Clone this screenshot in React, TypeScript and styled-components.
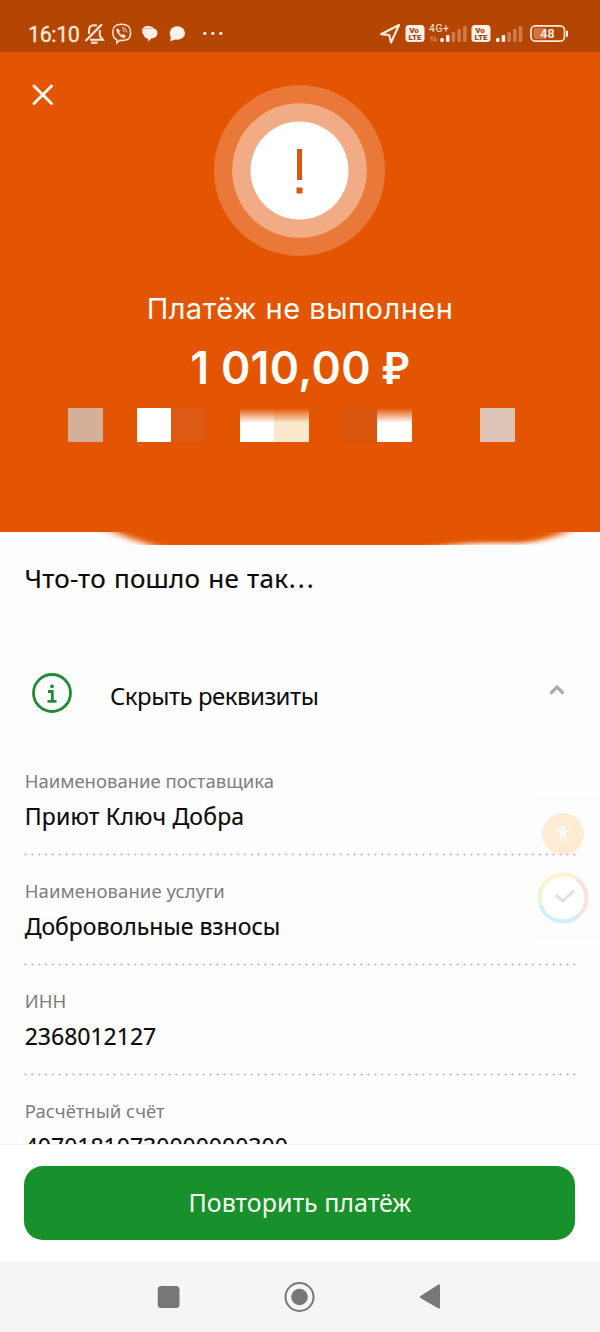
import React from "react";
import styled, { createGlobalStyle } from "styled-components";

const Global = createGlobalStyle`
  * { box-sizing: border-box; }
  html, body { margin: 0; padding: 0; background: #fff; }
  body { font-family: "Noto Sans", "Open Sans", sans-serif; color: #0b0b0b; }
`;

const Screen = styled.div`
  position: relative;
  width: 600px;
  height: 1332px;
  overflow: hidden;
  display: flex;
  flex-direction: column;
  background: #fefefe;
`;

const StatusBar = styled.div`
  height: 52px;
  flex: none;
  display: flex;
  justify-content: space-between;
  padding: 16px 31px 0 28px;
  background: #b54503;
  font-family: Roboto, sans-serif;
  color: #ffeadb;
`;

const Clock = styled.div`
  width: 56px;
  font-size: 21.5px;
  line-height: 37px;
  letter-spacing: -0.4px;
  -webkit-text-stroke: 0.3px #ffeadb;
`;

const StatusGroup = styled.div`
  display: flex;
`;

const Glyphs = styled.svg`
  display: block;
  flex: none;
`;

const Hero = styled.header`
  position: relative;
  height: 479.5px;
  flex: none;
  display: flex;
  flex-direction: column;
  align-items: center;
  background: #e35502;
  color: #fffdf8;
  font-family: Inter, sans-serif;
`;

const Close = styled.button`
  position: absolute;
  left: 32px;
  top: 32px;
  padding: 0;
  border: 0;
  background: none;
  line-height: 0;
`;

const Halo = styled.div`
  margin: 33px 1px 0 0;
  width: 171px;
  height: 171px;
  flex: none;
`;

const Title = styled.h1`
  margin: 35px 0 0;
  font-size: 29px;
  font-weight: 430;
  line-height: 36px;
  letter-spacing: 0.5px;
  white-space: nowrap;
`;

const Amount = styled.div`
  margin-top: 13px;
  height: 56px;
  font-size: 44.5px;
  font-weight: 600;
  line-height: 56px;
  letter-spacing: 0.35px;
  white-space: nowrap;
`;

const Currency = styled.span`
  font-family: "Noto Sans", sans-serif;
  font-size: 45.5px;
  line-height: 1;
`;

const Mosaic = styled.div`
  align-self: flex-start;
  display: grid;
  grid-template-columns: repeat(13, 34.35px);
  margin: 11.5px 0 0 68.2px;
  height: 34px;
`;

const Tile = styled.div<{ $c: string; $faded?: boolean }>`
  background: ${(p) =>
    p.$faded ? `linear-gradient(#e35502 0, ${p.$c} 15px)` : p.$c};
`;

const Smear = styled.svg`
  position: absolute;
  left: 0;
  top: 478.5px;
  z-index: 1;
`;

const Details = styled.main`
  height: 612.5px;
  flex: none;
  overflow: hidden;
  padding: 0 24px 0 24px;
`;

const Message = styled.p`
  margin: 28px 0 0 0.5px;
  font-size: 26px;
  line-height: 36px;
  letter-spacing: 0.25px;
  word-spacing: 1px;
  white-space: nowrap;
  -webkit-text-stroke: 0.2px #0b0b0b;
`;

const Dots = styled.span`
  letter-spacing: 2px;
  margin-left: 0.5px;
`;

const Toggle = styled.div`
  display: flex;
  align-items: center;
  height: 64px;
  margin-top: 65.5px;
  padding-left: 8px;
`;

const Chevron = styled.svg`
  margin-top: -3px;
`;

const ToggleText = styled.span`
  flex: 1;
  margin: 5px 0 0 38px;
  font-size: 24px;
  line-height: 34px;
  letter-spacing: -0.5px;
  white-space: nowrap;
`;

const Fields = styled.div`
  margin-top: 29.5px;
`;

const Field = styled.div`
  height: 110px;
  padding: 13px 0 0 0.7px;
  background: radial-gradient(circle, #b5b5b5 0.8px, transparent 1.3px) -2px 98px / 6.87px 3px repeat-x;
`;

const Label = styled.div<{ $track?: number }>`
  font-size: 18.5px;
  line-height: 26px;
  color: #7d7d7d;
  letter-spacing: ${(p) => p.$track ?? 0}px;
  white-space: nowrap;
`;

const Value = styled.div<{ $track?: number }>`
  margin-top: 6px;
  font-size: 23px;
  line-height: 32px;
  letter-spacing: ${(p) => p.$track ?? 0}px;
  white-space: nowrap;
  -webkit-text-stroke: 0.2px #0b0b0b;
`;

const Widget = styled.aside`
  position: absolute;
  left: 526px;
  top: 798px;
  width: 74px;
  height: 140px;
  border-radius: 16px 0 0 16px;
  background: rgba(0, 0, 0, 0.005);
  box-shadow: 0 0 6px rgba(0, 0, 0, 0.012);
`;

const Footer = styled.footer`
  height: 117px;
  flex: none;
  padding: 20.5px 24.4px 0;
  border-top: 1px solid #f4f4f4;
  background: #fff;
`;

const Retry = styled.button`
  display: block;
  width: 551px;
  height: 74px;
  padding: 0 0 2px 0;
  border: 0;
  border-radius: 19px;
  background: #18902c;
  color: #f7fff2;
  font-family: "Noto Sans", sans-serif;
  font-size: 25px;
  line-height: 72px;
`;

const NavBar = styled.nav`
  flex: 1;
  background: #f5f5f5;
`;

const tiles: { c: string; faded?: boolean }[] = [
  { c: "#d3ae99" },
  { c: "transparent" },
  { c: "#ffffff" },
  { c: "#dc5a13" },
  { c: "transparent" },
  { c: "#ffffff", faded: true },
  { c: "#f8e9cd", faded: true },
  { c: "transparent" },
  { c: "#d9560f" },
  { c: "#ffffff", faded: true },
  { c: "transparent" },
  { c: "transparent" },
  { c: "#dec3b7" },
];

const fields = [
  { label: "Наименование поставщика", value: "Приют Ключ Добра", track: 0.2 },
  { label: "Наименование услуги", value: "Добровольные взносы", labelTrack: 0.08 },
  { label: "ИНН", value: "2368012127" },
  { label: "Расчётный счёт", value: "40701810730000000300" },
];

function NotificationIcons() {
  return (
    <Glyphs width="146" height="36" viewBox="84 16 146 36" fill="none" stroke="#ffeadb" strokeWidth="2">
      <path d="M85.500 41 102 24.300" strokeWidth="2.200" />
      <path d="M89 34v-3.500c0-3.200 2-5.300 5.200-5.300 1 0 2 .2 2.800.7M99.800 30V36l3 3.700H90" />
      <path d="M91 42.700h6.500" strokeWidth="2.200" />
      <path d="M121.500 24.300c-6.500 0-8.700 2.500-8.700 8 0 4 1 6.300 4 7.400v3.300l3-2.700c8.500.7 10.800-1.800 10.800-8 0-5.500-2.400-8-9.100-8Z" strokeWidth="1.500" />
      <path d="M117.500 28.500c-1.200.8-1.200 2 0 4 1.500 2.700 3.300 4.500 6 5.300 1.200.2 2.200-1.300 1.800-2l-2.300-1.500-1.200 1c-1.500-.8-2.500-2-3-3.400l1-1Z" fill="#ffeadb" stroke="#ffeadb" strokeWidth=".5" />
      <path d="M122 27.500c3 .2 4.500 2 4.500 4.800M122.300 29.800c1.300.1 2 .9 2.100 2.200" strokeWidth="1" />
      <g fill="#fff1e8" stroke="none">
        <path d="M142 31c0-3 2.500-5 6-5 3 0 5 1 6 2.500 2.500.8 3.700 2.600 3.500 5-.3 3-2.500 4.500-6.500 5.300l-3 3v-3c-2.500-.3-4-1.700-4.300-4-1-.8-1.700-2-1.700-3.800Z" />
        <ellipse cx="177.300" cy="33" rx="7.700" ry="6.800" />
        <path d="m171 36-1 5.200 6-2Z" />
        <circle cx="204.800" cy="33.400" r="1.600" />
        <circle cx="212.800" cy="33.400" r="1.600" />
        <circle cx="220.800" cy="33.400" r="1.600" />
      </g>
      <path d="M142.700 32c.3-2.500 2-3.700 5-3.700h5" stroke="#d99670" strokeWidth=".7" />
    </Glyphs>
  );
}

function SignalIcons() {
  const bars = (x: number) => (
    <g>
      {[4, 7, 10, 13, 16].map((h, i) => (
        <rect key={h} x={x + i * 5.7} y={42 - h} width="3.500" height={h} rx="1" fill={i < 2 ? "#fff1e8" : "#d17a4b"} />
      ))}
    </g>
  );
  const volte = (x: number) => (
    <g>
      <rect x={x} y="25" width="19" height="17" rx="3.500" fill="#fff1e8" />
      <text x={x + 8.5} y="32.800" textAnchor="middle" fontSize="8" fontWeight="900" fill="#a4430d">Vo</text>
      <text x={x + 9.5} y="40.400" textAnchor="middle" fontSize="8" fontWeight="900" fill="#a4430d">LTE</text>
    </g>
  );
  return (
    <Glyphs width="190" height="36" viewBox="379 16 190 36" fontFamily="Roboto, sans-serif">
      <path d="M381 34.200 399 25l-8 17.500-1.800-7.500Z" fill="none" stroke="#ffeadb" strokeWidth="2.200" strokeLinejoin="round" />
      {volte(405.5)}
      <text x="429" y="32" fontSize="10.500" fill="#ffeadb" textLength="20">4G+</text>
      <path d="M432 41.500v-5l-2 2M435 36.500v5l2-2" fill="none" stroke="#e0a17d" strokeWidth="1" />
      {bars(440.3)}
      {volte(471.5)}
      {bars(496)}
      <rect x="531" y="25.800" width="33.500" height="15.400" rx="4.500" fill="none" stroke="#ffeadb" strokeWidth="1.700" />
      <rect x="533.500" y="28" width="13" height="11" rx="2" fill="#d4743f" />
      <path d="M567 31.500v4.500" stroke="#ffeadb" strokeWidth="2" strokeLinecap="round" />
      <text x="547.500" y="38" textAnchor="middle" fontSize="12.500" fontWeight="600" fill="#fff1e8">48</text>
    </Glyphs>
  );
}

export default function App() {
  return (
    <Screen>
      <Global />
      <StatusBar>
        <StatusGroup>
          <Clock>16:10</Clock>
          <NotificationIcons />
        </StatusGroup>
        <SignalIcons />
      </StatusBar>

      <Hero>
        <Close aria-label="Закрыть">
          <svg width="22" height="22" viewBox="0 0 22 22" stroke="#fffaf0" strokeWidth="2.900" strokeLinecap="round">
            <path d="m2 2 17.500 17.500M19.500 2 2 19.500" />
          </svg>
        </Close>
        <Halo>
          <svg width="171" height="171" viewBox="0 0 171 171">
            <circle cx="85.500" cy="85.500" r="85.500" fill="#ea7939" />
            <circle cx="85.500" cy="85.500" r="67.300" fill="#f2ac85" />
            <circle cx="85.500" cy="85.500" r="49" fill="#fff" />
            <path d="M83 64h5v31h-5ZM82.500 102.500h6v6h-6Z" fill="#dc560e" />
          </svg>
        </Halo>
        <Title>Платёж не выполнен</Title>
        <Amount>1 010,00 <Currency>₽</Currency></Amount>
        <Mosaic>
          {tiles.map((t, i) => (
            <Tile key={i} $c={t.c} $faded={t.faded} />
          ))}
        </Mosaic>
        <Smear width="600" height="14" viewBox="0 0 600 14">
          <defs>
            <filter id="soft" x="-10%" y="-100%" width="120%" height="300%">
              <feGaussianBlur stdDeviation="8 2.200" />
            </filter>
          </defs>
          <path d="M100 -8 118 3Q145 13 175 21H400Q450 13 480 12H525Q548 9 566 1V-8Z" fill="#e35502" filter="url(#soft)" />
        </Smear>
      </Hero>

      <Details>
        <Message>
          Что-то пошло не так<Dots>...</Dots>
        </Message>
        <Toggle>
          <svg width="40" height="40" viewBox="0 0 40 40">
            <circle cx="20" cy="20" r="18.500" fill="none" stroke="#228b37" strokeWidth="2.800" />
            <circle cx="20" cy="13.300" r="1.900" fill="#228b37" />
            <path d="M16 18.500h4.300v9.500M15.500 28.300h9" fill="none" stroke="#228b37" strokeWidth="2.800" />
          </svg>
          <ToggleText>Скрыть реквизиты</ToggleText>
          <Chevron width="28" height="20" viewBox="0 0 28 20">
            <path d="m2.500 11.500 6.500-6.500 6.500 6.500" fill="none" stroke="#adadad" strokeWidth="3.200" />
          </Chevron>
        </Toggle>
        <Fields>
          {fields.map((f) => (
            <Field key={f.label}>
              <Label $track={f.labelTrack}>{f.label}</Label>
              <Value $track={f.track}>{f.value}</Value>
            </Field>
          ))}
        </Fields>
      </Details>

      <Footer>
        <Retry>Повторить платёж</Retry>
      </Footer>

      <NavBar>
        <svg width="600" height="71" viewBox="0 1261 600 71" fill="#777">
          <rect x="157.700" y="1286" width="21.800" height="22" rx="3.500" />
          <circle cx="299.500" cy="1297" r="14" fill="none" stroke="#777" strokeWidth="2" />
          <circle cx="299.500" cy="1297" r="8.300" />
          <path d="M420.500 1296 438.500 1284.500q1.500-.6 1.500 1v22q0 1.600-1.500 1L420.500 1298q-1.500-1 0-2Z" />
        </svg>
      </NavBar>

      <Widget>
        <svg width="74" height="140" viewBox="526 798 74 140" fill="none">
          <circle cx="563" cy="834" r="21" fill="#ffdcb0" opacity=".55" />
          <circle cx="563" cy="827.500" r="2.300" fill="#fff" />
          <path d="M557 830.500l4 1v4l-1 6M569 830.500l-4 1v4l1 6M561 831.500h4M563 832v4" stroke="#fff" strokeWidth="1.500" strokeLinecap="round" />
          <circle cx="563" cy="898" r="23.500" fill="#fff" />
          <g strokeWidth="4">
            <path d="M540.500 905a23.500 23.500 0 0 1 3-20" stroke="#e9f7d2" />
            <path d="M543.500 885A23.500 23.500 0 0 1 577 879" stroke="#fbf3d3" />
            <path d="M577 879a23.500 23.500 0 0 1 2 36" stroke="#fde0dc" />
            <path d="M579 915a23.500 23.500 0 0 1-38.500-10" stroke="#d3edf7" />
          </g>
          <path d="m555.500 895 7.500 6 11-10.500" stroke="#e2e2e4" strokeWidth="3" />
        </svg>
      </Widget>
    </Screen>
  );
}
